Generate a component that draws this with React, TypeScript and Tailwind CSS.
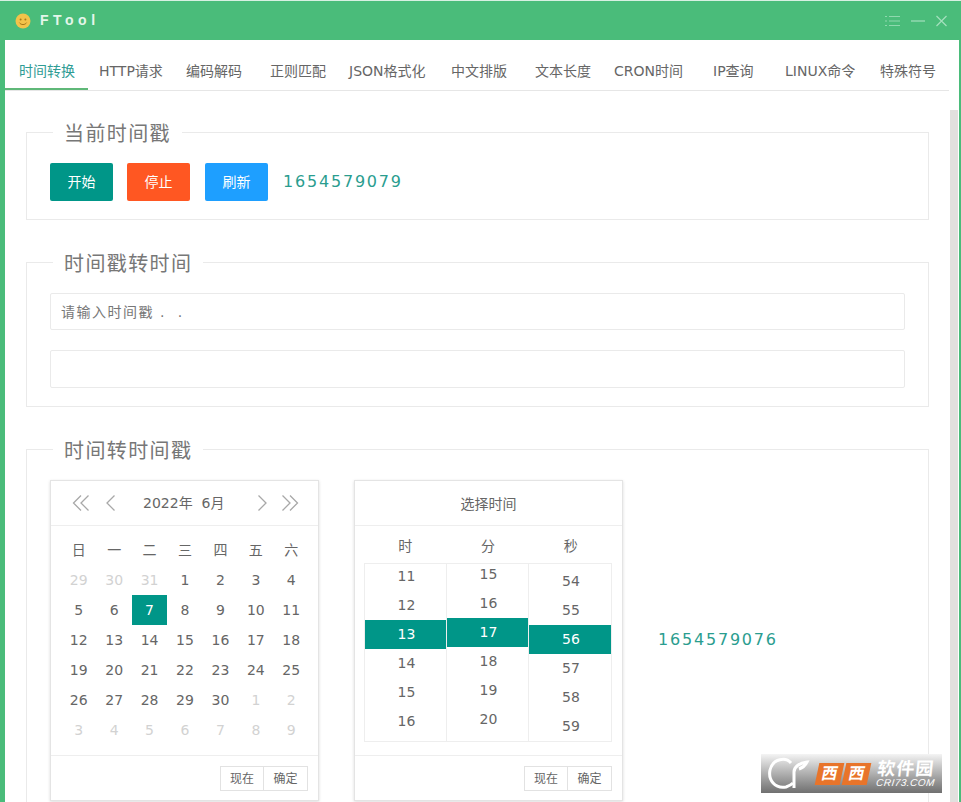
import { ReactNode } from 'react'

const tabs = [
  { label: '时间转换', cls: 'w-[83px] pl-[14px] text-[#2f9c94] border-b-2 border-[#5fb878]' },
  { label: 'HTTP请求', cls: 'w-[98px] pl-[11px]' },
  { label: '编码解码', cls: 'w-[84px]' },
  { label: '正则匹配', cls: 'w-[79px]' },
  { label: 'JSON格式化', cls: 'w-[102px]' },
  { label: '中文排版', cls: 'w-[84px]' },
  { label: '文本长度', cls: 'w-[79px]' },
  { label: 'CRON时间', cls: 'w-[99px]' },
  { label: 'IP查询', cls: 'w-[72px]' },
  { label: 'LINUX命令', cls: 'w-[95px]' },
  { label: '特殊符号', cls: 'w-[60px]' },
]

const days = [
  [29, 30, 31, 1, 2, 3, 4],
  [5, 6, 7, 8, 9, 10, 11],
  [12, 13, 14, 15, 16, 17, 18],
  [19, 20, 21, 22, 23, 24, 25],
  [26, 27, 28, 29, 30, 1, 2],
  [3, 4, 5, 6, 7, 8, 9],
]

const timeCols = [
  { items: [11, 12, 13, 14, 15, 16], active: 13, cls: '-mt-[2px]', border: 'border-r border-[#eee]' },
  { items: [15, 16, 17, 18, 19, 20], active: 17, cls: '-mt-[4px]', border: 'border-r border-[#eee]' },
  { items: [54, 55, 56, 57, 58, 59], active: 56, cls: 'mt-[3px]', border: '' },
]

function Section({ title, children, cls }: { title: string; children: ReactNode; cls: string }) {
  return (
    <fieldset className={`border border-[#eaeaea] px-[23px] ${cls}`}>
      <legend className="ml-[3px] h-[28px] pl-[11px] pr-[11px] text-[20px] leading-[32px] tracking-[1.4px] text-[#777]">
        {title}
      </legend>
      {children}
    </fieldset>
  )
}

function Chevron({ dir, double }: { dir: 'left' | 'right'; double?: boolean }) {
  const flip = dir === 'right' ? 'scale(-1,1) translate(-18,0)' : undefined
  return (
    <svg width="18" height="18" viewBox="0 0 18 18" fill="none" stroke="#a8a8a8" strokeWidth="1.3">
      <g transform={flip}>
        {double ? (
          <>
            <path d="M9 1.5 1.5 9 9 16.5" />
            <path d="M16.5 1.5 9 9 16.5 16.5" />
          </>
        ) : (
          <path d="M12.5 1.5 5 9 12.5 16.5" />
        )}
      </g>
    </svg>
  )
}

function PanelFooter() {
  return (
    <div className="flex h-[46px] justify-end border-t border-[#eee] pr-[10px] pt-[10px]">
      <div className="flex h-[25px] text-[12px] leading-[24px] text-[#666]">
        <span className="w-[44px] border border-[#e2e2e2] text-center">现在</span>
        <span className="-ml-px w-[45px] border border-[#e2e2e2] text-center">确定</span>
      </div>
    </div>
  )
}

function Calendar() {
  return (
    <div className="h-[321px] w-[269px] shrink-0 border border-[#e4e4e4] shadow-[0_1px_3px_rgba(0,0,0,0.14)]">
      <div className="flex h-[45px] items-center border-b border-[#eee] pl-[21px] pr-[19px] text-[14px] text-[#666]">
        <Chevron dir="left" double />
        <span className="ml-[12px]"><Chevron dir="left" /></span>
        <span className="ml-[23px] whitespace-pre">2022年  6月</span>
        <span className="ml-auto"><Chevron dir="right" /></span>
        <span className="ml-[10px]"><Chevron dir="right" double /></span>
      </div>
      <div className="h-[229px] pl-[10px] pr-[9px] pt-[9px] text-[14px] text-[#666]">
        <div className="grid grid-cols-7">
          {['日', '一', '二', '三', '四', '五', '六'].map((d) => (
            <div key={d} className="h-[30px] text-center leading-[30px]">{d}</div>
          ))}
          {days.map((week, w) =>
            week.map((d, i) => {
              const muted = (w === 0 && d > 20) || (w >= 4 && d < 10)
              const active = w === 1 && d === 7
              return (
                <div
                  key={`${w}-${i}`}
                  className={`h-[30px] text-center leading-[30px] ${muted ? 'text-[#d2d2d2]' : ''} ${active ? 'bg-[#009688] text-white' : ''}`}
                >
                  {d}
                </div>
              )
            }),
          )}
        </div>
      </div>
      <PanelFooter />
    </div>
  )
}

function TimePanel() {
  return (
    <div className="ml-[35px] h-[321px] w-[269px] shrink-0 border border-[#e4e4e4] shadow-[0_1px_3px_rgba(0,0,0,0.14)]">
      <div className="h-[45px] border-b border-[#eee] text-center text-[14px] leading-[46px] text-[#666]">选择时间</div>
      <div className="h-[229px] pl-[9px] pr-[10px] text-[14px] text-[#666]">
        <div className="grid h-[37px] grid-cols-3 text-center leading-[40px]">
          <span>时</span>
          <span>分</span>
          <span>秒</span>
        </div>
        <div className="grid h-[179px] grid-cols-3 overflow-hidden border border-[#eee]">
          {timeCols.map((col) => (
            <div key={col.active} className={`overflow-hidden ${col.border}`}>
              <div className={col.cls}>
                {col.items.map((n) => (
                  <div
                    key={n}
                    className={`h-[29px] pl-[2px] text-center leading-[29px] ${n === col.active ? 'bg-[#009688] font-medium text-white' : ''}`}
                  >
                    {n}
                  </div>
                ))}
              </div>
            </div>
          ))}
        </div>
      </div>
      <PanelFooter />
    </div>
  )
}

function Watermark() {
  return (
    <div className="absolute left-[761px] top-[753px] flex h-[39px] w-[181px] items-center bg-gradient-to-b from-[#f4f4f4] to-[#707070] pl-[6px]">
      <svg width="46" height="36" viewBox="0 0 46 36" fill="none" stroke="#fff" strokeWidth="3">
        <path d="M24 7C19 1 6 2 3 14c-2 10 5 19 16 17 3-1 5-2 7-4" />
        <path d="M27 32V16c0-5 5-9 13-10-2 4-5 6-8 7" />
      </svg>
      <div className="ml-[4px] flex gap-[2px]">
        <span className="flex h-[22px] w-[25px] -skew-x-12 items-center justify-center bg-[#e8742a] text-[16px] font-bold leading-none text-white">西</span>
        <span className="flex h-[22px] w-[25px] -skew-x-12 items-center justify-center bg-[#e8742a] text-[16px] font-bold leading-none text-white">西</span>
      </div>
      <div className="ml-[8px] -skew-x-6 text-white">
        <div className="text-[18px] font-bold leading-[19px] tracking-[1px]">软件园</div>
        <div className="font-['Liberation_Sans',sans-serif] text-[10px] italic leading-[10px] tracking-[0.5px]">CRI73.COM</div>
      </div>
    </div>
  )
}

export default function App() {
  return (
    <div className="relative flex h-[802px] w-[961px] flex-col overflow-hidden border-t border-[#d8f0e2] bg-[#4abc7a] font-['DejaVu_Sans','Noto_Sans_CJK_SC',sans-serif]">
      <header className="flex h-[39px] shrink-0 items-center pl-[15px] pr-[14px]">
        <svg width="16" height="16" viewBox="0 0 16 16">
          <circle cx="8" cy="8" r="7.5" fill="#f3c34a" />
          <circle cx="5.6" cy="6.4" r="1" fill="#a9791a" />
          <circle cx="10.4" cy="6.4" r="1" fill="#a9791a" />
          <path d="M4.4 9.6c1.4 2.6 5.8 2.6 7.2 0" fill="none" stroke="#a9791a" strokeWidth="1" />
        </svg>
        <span className="ml-[9px] font-['Liberation_Sans',sans-serif] text-[14px] font-bold tracking-[4.5px] text-[#e4f6ea]">FTool</span>
        <div className="ml-auto flex items-center gap-[11px]">
          <svg width="15" height="12" viewBox="0 0 15 12" stroke="#8fd8ae" strokeWidth="1">
            <path d="M4 1.5h11M4 6h11M4 10.5h11M0 1.5h2M0 6h2M0 10.5h2" />
          </svg>
          <svg width="14" height="12" viewBox="0 0 14 12" stroke="#a4e0bd" strokeWidth="1.2">
            <path d="M0 6h14" />
          </svg>
          <svg width="11" height="12" viewBox="0 0 11 12" stroke="#a4e0bd" strokeWidth="1.2">
            <path d="M.5 1 10.5 11M10.5 1 .5 11" />
          </svg>
        </div>
      </header>

      <div className="ml-[5px] mr-[2px] flex min-h-0 flex-1 bg-white">
        <div className="min-w-0 flex-1 overflow-hidden">
          <nav className="flex h-[51px] border-b border-[#e6e6e6] text-[14px] text-[#666]">
            {tabs.map((t) => (
              <div key={t.label} className={`h-[50px] shrink-0 whitespace-nowrap leading-[62px] ${t.cls}`}>
                {t.label}
              </div>
            ))}
          </nav>
          <main className="pl-[21px] pr-[20px] pt-[27px]">
            <Section title="当前时间戳" cls="h-[102px]">
              <div className="mt-[17px] flex items-center text-[14px] text-white">
                <button className="h-[38px] w-[63px] rounded-[2px] bg-[#009688]">开始</button>
                <button className="ml-[14px] h-[38px] w-[63px] rounded-[2px] bg-[#ff5722]">停止</button>
                <button className="ml-[15px] h-[38px] w-[63px] rounded-[2px] bg-[#1e9fff]">刷新</button>
                <span className="ml-[15px] text-[16px] tracking-[1.8px] text-[#2a9d8f]">1654579079</span>
              </div>
            </Section>
            <Section title="时间戳转时间" cls="mt-[28px] h-[159px]">
              <input
                placeholder="请输入时间戳 .  ."
                className="mt-[17px] block h-[37px] w-full rounded-[2px] border border-[#eaeaea] px-[10px] pt-px text-[14px] tracking-[1.5px] placeholder:text-[#777]"
              />
              <div className="mt-[20px] h-[38px] rounded-[2px] border border-[#eaeaea]" />
            </Section>
            <Section title="时间转时间戳" cls="mt-[28px] h-[420px]">
              <div className="mt-[17px] flex items-center">
                <Calendar />
                <TimePanel />
                <span className="-mt-[2px] ml-[35px] text-[16px] tracking-[1.8px] text-[#2a9d8f]">1654579076</span>
              </div>
            </Section>
          </main>
        </div>
        <div className="ml-px mr-px w-[8px] shrink-0 pt-[70px]">
          <div className="h-full bg-[#e2e0de]" />
        </div>
      </div>

      <Watermark />
    </div>
  )
}
